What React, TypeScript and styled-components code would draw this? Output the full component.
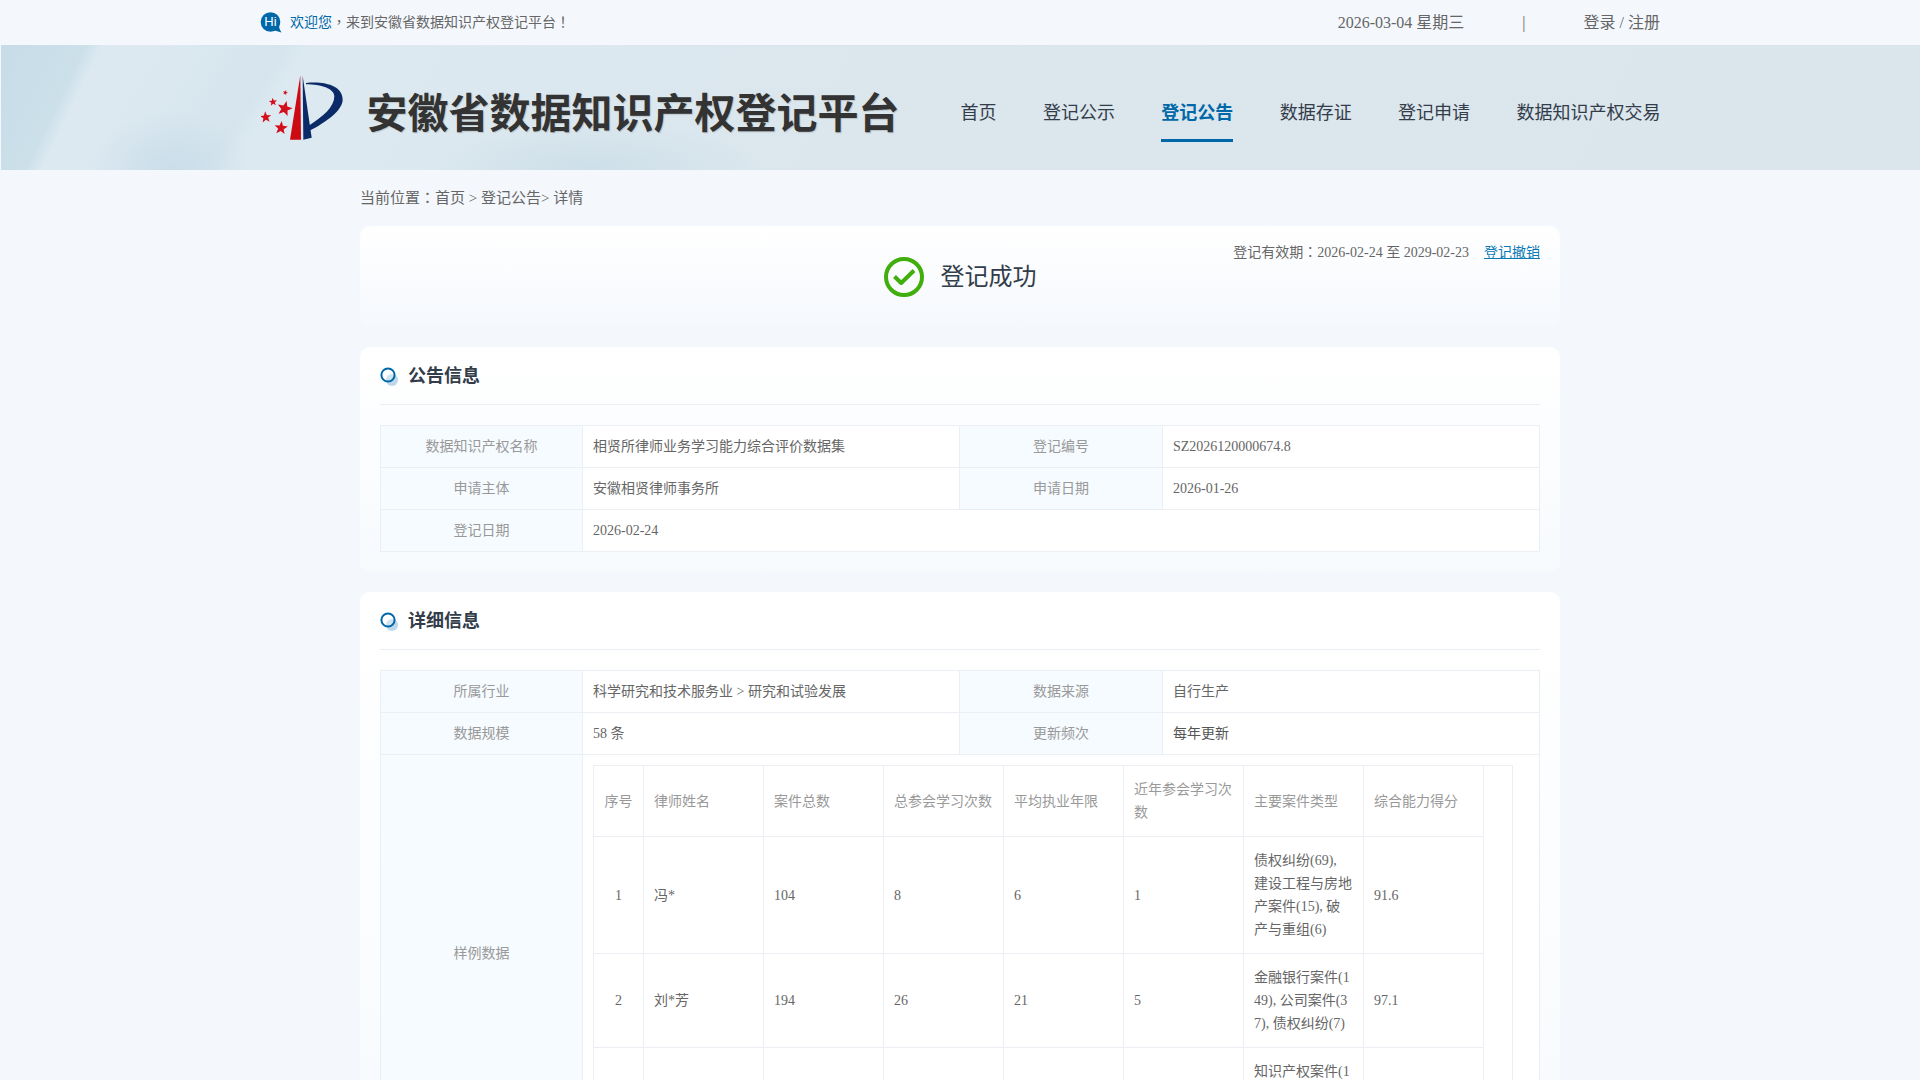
import styled, { createGlobalStyle } from "styled-components";

const navLinks = [
    { text: "首页" },
    { text: "登记公示" },
    { text: "登记公告", active: true },
    { text: "数据存证" },
    { text: "登记申请" },
    { text: "数据知识产权交易" },
];

const sampleHeads = ["序号", "律师姓名", "案件总数", "总参会学习次数", "平均执业年限", "近年参会学习次数", "主要案件类型", "综合能力得分"];

const sampleRows = [
    ["1", "冯*", "104", "8", "6", "1", "债权纠纷(69), 建设工程与房地产案件(15), 破产与重组(6)", "91.6"],
    ["2", "刘*芳", "194", "26", "21", "5", "金融银行案件(149), 公司案件(37), 债权纠纷(7)", "97.1"],
    ["3", "陈*", "156", "18", "14", "3", "知识产权案件(102), 公司案件(31), 合同纠纷(9)", "94.3"],
];

const logoStars = [
    { x: 103, y: 97, r: 8, turn: 0.3 },
    { x: 66, y: 125, r: 13, turn: -0.1 },
    { x: 101, y: 145, r: 24, turn: 0.25 },
    { x: 44, y: 171, r: 18, turn: -0.1 },
    { x: 90, y: 203, r: 21, turn: 0.1 },
];

// five pointed star, used by the logo
function starPoints(cx: number, cy: number, r: number, turn: number) {
    const points: string[] = [];
    for (let i = 0; i < 10; i++) {
        const radius = i % 2 === 0 ? r : r * 0.42;
        const angle = turn - Math.PI / 2 + (i * Math.PI) / 5;
        points.push(`${cx + radius * Math.cos(angle)},${cy + radius * Math.sin(angle)}`);
    }
    return points.join(" ");
}

function Logo() {
    return (
        <svg width="84" height="68" viewBox="30 38 252 204">
            {logoStars.map((star) => (
                <polygon key={star.x} points={starPoints(star.x, star.y, star.r, star.turn)} fill="#d40f1c" />
            ))}
            <path d="M148 45 L150 238 L117 238 Z" fill="#cc0a12" />
            <path d="M155 46 L182 232 L157 238 Z" fill="#0b2a68" />
            <path
                d="M165 68 C 225 62 275 78 275 118 C 275 150 225 185 178 210 L 173 196 C 215 170 250 140 250 108 C 250 85 210 72 165 72 Z"
                fill="#0b2a68"
            />
        </svg>
    );
}

function HiIcon() {
    return (
        <svg width="22" height="22" viewBox="0 0 22 22">
            <circle cx="10.5" cy="10" r="9.8" fill="#0068a8" />
            <path d="M13 18 L21.5 20.5 Q18.5 16 19 12 Z" fill="#0068a8" />
            <text x="10.5" y="14.4" textAnchor="middle" fontSize="13" fontFamily="Liberation Sans, sans-serif" fill="#fff">
                Hi
            </text>
        </svg>
    );
}

function CheckIcon() {
    return (
        <svg width="40" height="40" viewBox="0 0 40 40">
            <circle cx="20" cy="20" r="18" fill="none" stroke="#40ae0c" strokeWidth="4" />
            <path d="M10.5 19.5 L17.2 26 L30 13.5" fill="none" stroke="#40ae0c" strokeWidth="4" strokeLinejoin="round" />
        </svg>
    );
}

function SectionIcon() {
    return (
        <SectionIconSvg width="20" height="20" viewBox="0 0 20 20">
            <circle cx="12" cy="13" r="6" fill="#bcd8ea" />
            <circle cx="8" cy="8" r="6.6" fill="#ffffff" fillOpacity="0.3" stroke="#0068a8" strokeWidth="2" />
        </SectionIconSvg>
    );
}

function App() {
    return (
        <>
            <GlobalStyle />
            <TopBar>
                <TopInner>
                    <Welcome>
                        <HiIcon />
                        <span>
                            <WelcomeName>欢迎您</WelcomeName>
                            <Punct>，</Punct>来到安徽省数据知识产权登记平台<Punct>！</Punct>
                        </span>
                    </Welcome>
                    <TopRight>
                        <span>2026-03-04 星期三</span>
                        <TopDivider>|</TopDivider>
                        <span>登录 / 注册</span>
                    </TopRight>
                </TopInner>
            </TopBar>

            <Header>
                <HeaderInner>
                    <Brand>
                        <Logo />
                        <BrandTitle>安徽省数据知识产权登记平台</BrandTitle>
                    </Brand>
                    <Nav>
                        {navLinks.map((link) => (
                            <NavLink key={link.text} href="#" $active={link.active}>
                                {link.text}
                            </NavLink>
                        ))}
                    </Nav>
                </HeaderInner>
            </Header>

            <Main>
                <Breadcrumb>
                    <span>
                        当前位置<Punct>：</Punct>首页 &gt; 登记公告&gt; 详情
                    </span>
                </Breadcrumb>

                <StatusCard>
                    <span />
                    <Status>
                        <CheckIcon />
                        <StatusText>登记成功</StatusText>
                    </Status>
                    <Validity>
                        <span>
                            登记有效期<Punct>：</Punct>2026-02-24 至 2029-02-23
                        </span>
                        <RevokeLink href="#">登记撤销</RevokeLink>
                    </Validity>
                </StatusCard>

                <Card>
                    <SectionTitle>
                        <SectionIcon />
                        <h2>公告信息</h2>
                    </SectionTitle>
                    <InfoTable>
                        <InfoCols />
                        <tbody>
                            <tr>
                                <LabelCell>数据知识产权名称</LabelCell>
                                <ValueCell>相贤所律师业务学习能力综合评价数据集</ValueCell>
                                <LabelCell>登记编号</LabelCell>
                                <ValueCell>SZ2026120000674.8</ValueCell>
                            </tr>
                            <tr>
                                <LabelCell>申请主体</LabelCell>
                                <ValueCell>安徽相贤律师事务所</ValueCell>
                                <LabelCell>申请日期</LabelCell>
                                <ValueCell>2026-01-26</ValueCell>
                            </tr>
                            <tr>
                                <LabelCell>登记日期</LabelCell>
                                <ValueCell colSpan={3}>2026-02-24</ValueCell>
                            </tr>
                        </tbody>
                    </InfoTable>
                </Card>

                <Card>
                    <SectionTitle>
                        <SectionIcon />
                        <h2>详细信息</h2>
                    </SectionTitle>
                    <InfoTable>
                        <InfoCols />
                        <tbody>
                            <tr>
                                <LabelCell>所属行业</LabelCell>
                                <ValueCell>科学研究和技术服务业 &gt; 研究和试验发展</ValueCell>
                                <LabelCell>数据来源</LabelCell>
                                <ValueCell>自行生产</ValueCell>
                            </tr>
                            <tr>
                                <LabelCell>数据规模</LabelCell>
                                <ValueCell>58 条</ValueCell>
                                <LabelCell>更新频次</LabelCell>
                                <ValueCell $dark>每年更新</ValueCell>
                            </tr>
                            <tr>
                                <LabelCell>样例数据</LabelCell>
                                <SampleCell colSpan={3}>
                                    <SampleScroll>
                                        <SampleTable>
                                            <colgroup>
                                                <IndexCol />
                                                {sampleHeads.slice(1).map((head) => (
                                                    <DataCol key={head} />
                                                ))}
                                            </colgroup>
                                            <thead>
                                                <tr>
                                                    {sampleHeads.map((head, i) => (
                                                        <SampleHead key={head} $center={i === 0}>
                                                            {head}
                                                        </SampleHead>
                                                    ))}
                                                </tr>
                                            </thead>
                                            <tbody>
                                                {sampleRows.map((row) => (
                                                    <tr key={row[0]}>
                                                        {row.map((value, i) => (
                                                            <SampleValue key={i} $center={i === 0}>
                                                                {value}
                                                            </SampleValue>
                                                        ))}
                                                    </tr>
                                                ))}
                                            </tbody>
                                        </SampleTable>
                                    </SampleScroll>
                                </SampleCell>
                            </tr>
                        </tbody>
                    </InfoTable>
                </Card>
            </Main>
        </>
    );
}

function InfoCols() {
    return (
        <colgroup>
            <LabelCol />
            <ValueCol />
            <WideLabelCol />
            <ValueCol />
        </colgroup>
    );
}

// Styling
const GlobalStyle = createGlobalStyle`
    html {
        scrollbar-width: none;
    }

    body {
        margin: 0;
        background: #f4f7fc;
        color: #666;
        font-family: "Liberation Serif", "Noto Sans CJK SC", serif;
    }
`;

// the reference sets full width punctuation in the middle of its cell
const Punct = styled.span`
    font-family: "Noto Sans CJK TC", sans-serif;
    line-height: 0;
`;

const TopBar = styled.div`
    height: 45px;
    background: #f4f8fd;
`;

const TopInner = styled.div`
    width: 1400px;
    height: 100%;
    margin: 0 auto;
    display: flex;
    justify-content: space-between;
    align-items: center;
`;

const Welcome = styled.div`
    display: flex;
    align-items: center;
    gap: 8px;
    font-size: 14px;
    line-height: 20px;
`;

const WelcomeName = styled.span`
    color: #0068a8;
`;

const TopRight = styled.div`
    display: flex;
    align-items: center;
    font-size: 16px;
    line-height: 22px;
    color: #666;
`;

const TopDivider = styled.span`
    margin: 0 58px;
`;

const Header = styled.header`
    height: 125px;
    margin-left: 1px;
    background:
        radial-gradient(ellipse 170px 50px at 590px 125px, #cddfe9, transparent),
        radial-gradient(ellipse 80px 60px at 170px 125px, rgba(199, 219, 232, 0.8), transparent),
        linear-gradient(122deg, transparent 130px, rgba(200, 220, 232, 0.35) 240px, transparent 262px),
        linear-gradient(116deg, #c8dce8 0, #cce0ea 76px, #dde9f1 92px, #dce9f0 330px, #dbe6ed 800px, #dae5ec 100%);
`;

const HeaderInner = styled.div`
    width: 1400px;
    height: 100%;
    margin: 0 auto;
    display: flex;
    justify-content: space-between;
`;

const Brand = styled.div`
    display: flex;
    align-items: flex-start;
    gap: 22px;
    padding-top: 28px;
`;

const BrandTitle = styled.div`
    margin-top: 14px;
    font-family: "Noto Sans CJK SC", sans-serif;
    font-size: 41px;
    line-height: 46px;
    font-weight: 700;
    color: #333;
    white-space: nowrap;
    text-shadow: 1px 1px 1px rgba(0, 0, 0, 0.15);
`;

const Nav = styled.nav`
    display: flex;
    align-items: flex-start;
    gap: 46.4px;
    padding-top: 56px;
`;

const NavLink = styled.a<{ $active?: boolean }>`
    height: 24px;
    padding-bottom: 14px;
    line-height: 24px;
    font-size: 18px;
    text-decoration: none;
    white-space: nowrap;
    color: ${(props) => (props.$active ? "#0068a8" : "#333d4a")};
    font-weight: ${(props) => (props.$active ? 700 : 400)};
    border-bottom: 3px solid ${(props) => (props.$active ? "#0068a8" : "transparent")};
`;

const Main = styled.main`
    width: 1200px;
    margin: 0 auto;
`;

const Breadcrumb = styled.div`
    height: 56px;
    display: flex;
    align-items: center;
    font-size: 15px;
    line-height: 20px;
    color: #666;
    white-space: pre;
`;

const StatusCard = styled.section`
    height: 101px;
    padding: 0 20px;
    box-sizing: border-box;
    margin-bottom: 20px;
    display: grid;
    grid-template-columns: 1fr auto 1fr;
    border-radius: 10px;
    background: linear-gradient(180deg, #fff, #f5f8fd);
`;

const Status = styled.div`
    display: flex;
    align-items: center;
    gap: 17px;
`;

const StatusText = styled.div`
    font-size: 24px;
    line-height: 32px;
    color: #333d4a;
`;

const Validity = styled.div`
    padding-top: 18px;
    display: flex;
    justify-content: flex-end;
    gap: 15px;
    font-size: 14px;
    line-height: 18px;
    color: #666;
    white-space: nowrap;
`;

const RevokeLink = styled.a`
    color: #0a78b4;
`;

const Card = styled.section`
    padding: 0 20px 20px;
    margin-bottom: 20px;
    border-radius: 10px;
    background: linear-gradient(180deg, #fff, #f7fafd);
`;

const SectionTitle = styled.div`
    height: 57px;
    margin-bottom: 20px;
    display: flex;
    align-items: center;
    gap: 8px;
    border-bottom: 1px solid #ebeef3;

    h2 {
        margin: 0;
        font-size: 18px;
        line-height: 24px;
        font-weight: 700;
        color: #333d4a;
    }
`;

const SectionIconSvg = styled.svg`
    margin-top: 2px;
`;

const InfoTable = styled.table`
    width: 1159px;
    table-layout: fixed;
    border-collapse: collapse;
    font-size: 14px;
    line-height: 20px;
`;

const LabelCol = styled.col`
    width: 202px;
`;

const WideLabelCol = styled.col`
    width: 203px;
`;

const ValueCol = styled.col`
    width: 377px;
`;

const LabelCell = styled.td`
    height: 41px;
    padding: 0 10px;
    text-align: center;
    color: #999;
    background: #f6fbff;
    border: 1px solid #ebeef3;
`;

const ValueCell = styled.td<{ $dark?: boolean }>`
    height: 41px;
    padding: 0 10px;
    color: ${(props) => (props.$dark ? "#555" : "#666")};
    background: #fff;
    border: 1px solid #ebeef3;
`;

const SampleCell = styled.td`
    padding: 10px;
    background: #fff;
    border: 1px solid #ebeef3;
`;

const SampleScroll = styled.div`
    width: 920px;
    box-sizing: border-box;
    border-top: 1px solid #ebeef3;
    border-right: 1px solid #ebeef3;
`;

const SampleTable = styled.table`
    width: 890px;
    table-layout: fixed;
    border-collapse: collapse;
    font-size: 14px;
    line-height: 23px;
`;

const IndexCol = styled.col`
    width: 50px;
`;

const DataCol = styled.col`
    width: 120px;
`;

const SampleHead = styled.th<{ $center?: boolean }>`
    padding: 12px 10px;
    font-weight: 400;
    color: #999;
    text-align: ${(props) => (props.$center ? "center" : "left")};
    border: 1px solid #ebeef3;
    border-top: 0;
    word-break: break-all;
`;

const SampleValue = styled.td<{ $center?: boolean }>`
    padding: 12px 10px;
    color: #666;
    text-align: ${(props) => (props.$center ? "center" : "left")};
    border: 1px solid #ebeef3;
    word-break: break-all;
`;

export default App;
